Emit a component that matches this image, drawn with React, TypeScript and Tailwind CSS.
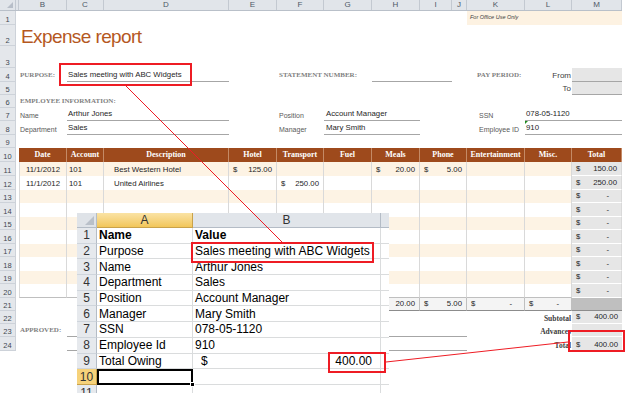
import React from "react";

const G =
  "grid grid-cols-[16px_3px_48px_37px_125px_48px_47px_48px_48px_32px_15px_58px_47px_50px] [&>*]:row-start-1";

const LBL = "font-['Liberation_Serif'] font-bold text-[7px] text-[#7f7f7f] leading-none";
const TXT = "text-[7.8px] text-[#262626] leading-none";
const SM = "text-[7px] text-[#595959] leading-none";

function R({ n, h, children }: { n: number; h: string; children?: React.ReactNode }) {
  return (
    <div className={`${G} ${h}`}>
      <div className="col-start-1 flex items-end justify-center border-r border-b border-[#cdd2d9] bg-[#e4e7eb] pb-[1px] text-[7.5px] leading-none text-[#3f4752]">
        {n}
      </div>
      {children}
    </div>
  );
}

function Money({ v, dashPr = "pr-[10px]" }: { v: string; dashPr?: string }) {
  if (!v) return null;
  return (
    <div className={`flex h-full w-full items-end justify-between pb-[2px] pl-[4px] ${v === "-" ? dashPr : "pr-[4px]"}`}>
      <span>$</span>
      <span>{v}</span>
    </div>
  );
}

const TC = [
  "col-start-3 border-l",
  "col-start-4",
  "col-start-5",
  "col-start-6",
  "col-start-7",
  "col-start-8",
  "col-start-9",
  "col-start-10 col-span-2",
  "col-start-12",
  "col-start-13",
  "col-start-14",
];

const HEAD = ["Date", "Account", "Description", "Hotel", "Transport", "Fuel", "Meals", "Phone", "Entertainment", "Misc.", "Total"];

const DATA: string[][] = [
  ["11/1/2012", "101", "Best Western Hotel", "125.00", "", "", "20.00", "5.00", "", "", "150.00"],
  ["11/1/2012", "101", "United Airlines", "", "250.00", "", "", "", "", "", "250.00"],
  ["", "", "", "", "", "", "", "", "", "", "-"],
  ["", "", "", "", "", "", "", "", "", "", "-"],
  ["", "", "", "", "", "", "", "", "", "", "-"],
  ["", "", "", "", "", "", "", "", "", "", "-"],
  ["", "", "", "", "", "", "", "", "", "", "-"],
  ["", "", "", "", "", "", "", "", "", "", "-"],
  ["", "", "", "", "", "", "", "", "", "", "-"],
  ["", "", "", "", "", "", "", "", "", "", "-"],
];

const ROWH = ["h-[14px]", "h-[14px]", "h-[13px]", "h-[14px]", "h-[13px]", "h-[14px]", "h-[13px]", "h-[14px]", "h-[13px]", "h-[14px]"];

const COLS = ["B", "C", "D", "E", "F", "G", "H", "I", "J", "K", "L", "M"];
const CSTART = ["col-start-3", "col-start-4", "col-start-5", "col-start-6", "col-start-7", "col-start-8", "col-start-9", "col-start-10", "col-start-11", "col-start-12", "col-start-13", "col-start-14"];

function MainSheet() {
  return (
    <div className="w-[622px] font-['Liberation_Sans']">
      <div className={`${G} h-[11px] bg-[#e1e5ea] border-b border-[#b9c0c9]`}>
        <div className="col-start-1 relative border-r border-[#c3c9d1]">
          <div className="absolute right-[2px] bottom-[2px] h-0 w-0 border-l-[6px] border-b-[6px] border-l-transparent border-b-[#b7bec8]" />
        </div>
        <div className="col-start-2 border-r border-[#c3c9d1]" />
        {COLS.map((c, i) => (
          <div
            key={c}
            className={`flex items-center justify-center border-r border-[#c3c9d1] text-[8px] leading-none text-[#4d5866] ${CSTART[i]}`}
          >
            {c}
          </div>
        ))}
      </div>

      <R n={1} h="h-[14px]">
        <div className="col-start-12 col-span-3 flex items-center bg-[#fdf2e2] pl-[3px] text-[5.5px] italic leading-none text-[#404040]">
          For Office Use Only
        </div>
      </R>
      <R n={2} h="h-[21px]">
        <div className="col-start-3 col-span-6 flex items-end pl-[2px] text-[19px] leading-none tracking-[-0.6px] text-[#b5581f]">
          Expense report
        </div>
      </R>
      <R n={3} h="h-[22px]" />
      <R n={4} h="h-[14px]">
        <div className={`col-start-3 flex items-end pb-[3px] pl-[1px] ${LBL}`}>PURPOSE:</div>
        <div className={`col-start-4 col-span-2 flex items-end border-b border-[#a6a6a6] pb-[2px] pl-[1px] ${TXT}`}>
          Sales meeting with ABC Widgets
        </div>
        <div className={`col-start-7 col-span-2 flex items-end pb-[3px] pl-[2px] ${LBL}`}>STATEMENT NUMBER:</div>
        <div className="col-start-9 col-span-2 border-b border-[#a6a6a6]" />
        <div className={`col-start-12 col-span-2 flex items-end pb-[3px] pl-[10px] ${LBL}`}>PAY PERIOD:</div>
        <div className="col-start-13 flex items-end justify-end pb-[2px] pr-[1px] text-[8px] leading-none text-[#404040]">From</div>
        <div className="col-start-14 border-b border-[#a6a6a6] bg-[#e6e6e6]" />
      </R>
      <R n={5} h="h-[13px]">
        <div className="col-start-13 flex items-end justify-end pb-[2px] pr-[1px] text-[8px] leading-none text-[#404040]">To</div>
        <div className="col-start-14 border-b border-[#a6a6a6] bg-[#e6e6e6]" />
      </R>
      <R n={6} h="h-[13px]">
        <div className={`col-start-3 col-span-3 flex items-end pb-[3px] pl-[1px] ${LBL}`}>EMPLOYEE INFORMATION:</div>
      </R>
      <R n={7} h="h-[13px]">
        <div className={`col-start-3 flex items-end pb-[2px] pl-[1px] ${SM}`}>Name</div>
        <div className={`col-start-4 col-span-2 flex items-end border-b border-[#a6a6a6] pb-[2px] pl-[1px] ${TXT}`}>Arthur Jones</div>
        <div className={`col-start-7 flex items-end pb-[2px] pl-[2px] ${SM}`}>Position</div>
        <div className={`col-start-8 col-span-2 flex items-end border-b border-[#a6a6a6] pb-[2px] pl-[2px] ${TXT}`}>Account Manager</div>
        <div className={`col-start-12 flex items-end pb-[2px] pl-[12px] ${SM}`}>SSN</div>
        <div className={`col-start-13 col-span-2 flex items-end border-b border-[#a6a6a6] pb-[2px] pl-[1px] ${TXT}`}>078-05-1120</div>
      </R>
      <R n={8} h="h-[14px]">
        <div className={`col-start-3 col-span-2 flex items-end pb-[2px] pl-[1px] ${SM}`}>Department</div>
        <div className={`col-start-4 col-span-2 flex items-end border-b border-[#a6a6a6] pb-[2px] pl-[1px] ${TXT}`}>Sales</div>
        <div className={`col-start-7 flex items-end pb-[2px] pl-[2px] ${SM}`}>Manager</div>
        <div className={`col-start-8 col-span-2 flex items-end border-b border-[#a6a6a6] pb-[2px] pl-[2px] ${TXT}`}>Mary Smith</div>
        <div className={`col-start-12 flex items-end pb-[2px] pl-[12px] ${SM}`}>Employee ID</div>
        <div className={`relative col-start-13 col-span-2 flex items-end border-b border-[#a6a6a6] pb-[2px] pl-[1px] ${TXT}`}>
          <div className="absolute left-0 top-0 h-0 w-0 border-r-[3px] border-t-[3px] border-r-transparent border-t-[#1f8a1f]" />
          910
        </div>
      </R>
      <R n={9} h="h-[13px]" />
      <R n={10} h="h-[14px]">
        {HEAD.map((hd, i) => (
          <div
            key={hd}
            className={`flex items-center justify-center border-r border-[#c48a66] bg-[#9e4a1c] font-['Liberation_Serif'] text-[8px] font-bold leading-none text-white ${TC[i].replace(" border-l", "")}`}
          >
            {hd}
          </div>
        ))}
      </R>
      {DATA.map((row, ri) => (
        <R key={ri} n={11 + ri} h={ROWH[ri]}>
          {row.map((v, ci) => {
            const band = ri % 2 === 0 ? "bg-[#fdf3e4]" : "bg-white";
            const bg = ci === 10 ? "bg-[#e6e6e6]" : band;
            let content: React.ReactNode = null;
            if (ci === 0)
              content = <div className="flex h-full items-end justify-center pb-[2px]">{v}</div>;
            else if (ci === 1) content = <div className="flex h-full items-end pb-[2px] pl-[2px]">{v}</div>;
            else if (ci === 2) content = <div className="flex h-full items-end pb-[2px] pl-[10px]">{v}</div>;
            else content = <Money v={v} dashPr="pr-[12px]" />;
            return (
              <div
                key={ci}
                className={`border-r border-[#d9d9d9] ${ci === 10 ? "border-b border-b-white" : ""} ${bg} ${TXT} ${TC[ci]} ${ri === 9 && ci < 10 ? "border-b border-b-[#bfbfbf]" : ""}`}
              >
                {content}
              </div>
            );
          })}
        </R>
      ))}
      <R n={21} h="h-[13px]">
        {["", "", "", "20.00", "5.00", "-", "-"].map((v, i) => (
          <div
            key={i}
            className={`border-r border-b border-[#bfbfbf] border-b-[#8c8c8c] bg-[#f4f4f4] ${TXT} ${TC[i + 3]}`}
          >
            <Money v={v} dashPr="pr-[12px]" />
          </div>
        ))}
        <div className="col-start-14 border-b border-[#8c8c8c] bg-[#bfbfbf]" />
      </R>
      <R n={22} h="h-[13px]">
        <div className="col-start-12 col-span-2 flex items-end justify-end pb-[2px] pr-[1px] font-['Liberation_Serif'] text-[7.5px] font-bold leading-none text-[#404040]">
          Subtotal
        </div>
        <div className={`col-start-14 bg-[#e6e6e6] border-b border-white ${TXT}`}>
          <Money v="400.00" />
        </div>
      </R>
      <R n={23} h="h-[13px]">
        <div className={`col-start-3 flex items-end pb-[3px] pl-[1px] ${LBL} text-[6.5px]`}>APPROVED:</div>
        <div className="col-start-4 col-span-8 border-b border-[#a6a6a6]" />
        <div className="col-start-12 col-span-2 flex items-end justify-end pb-[2px] pr-[1px] font-['Liberation_Serif'] text-[7.5px] font-bold leading-none text-[#404040]">
          Advances
        </div>
        <div className="col-start-14 bg-[#e6e6e6] border-b border-white" />
      </R>
      <R n={24} h="h-[14px]">
        <div className="col-start-4 col-span-8 border-b border-[#a6a6a6]" />
        <div className="col-start-12 col-span-2 flex items-end justify-end pb-[2px] pr-[1px] font-['Liberation_Serif'] text-[7.5px] font-bold leading-none text-[#404040]">
          Total
        </div>
        <div className={`col-start-14 bg-[#e6e6e6] ${TXT}`}>
          <Money v="400.00" />
        </div>
      </R>
    </div>
  );
}

const OG = "grid grid-cols-[20px_96px_188px_8px] [&>*]:row-start-1";

const OROWS: [string, string][] = [
  ["Name", "Value"],
  ["Purpose", "Sales meeting with ABC Widgets"],
  ["Name", "Arthur Jones"],
  ["Department", "Sales"],
  ["Position", "Account Manager"],
  ["Manager", "Mary Smith"],
  ["SSN", "078-05-1120"],
  ["Employee Id", "910"],
  ["Total Owing", ""],
];

function Overlay() {
  return (
    <div className="absolute left-[77px] top-[213px] h-[180px] w-[312px] overflow-hidden bg-white font-['Liberation_Sans'] text-[12px] leading-none text-black">
      <div className={`${OG} h-[15px]`}>
        <div className="relative border-r border-b border-[#b4bcc6] bg-[#dfe3e8]">
          <div className="absolute bottom-[2px] right-[2px] h-0 w-0 border-l-[9px] border-b-[9px] border-l-transparent border-b-[#b9c0c9]" />
        </div>
        <div className="flex items-center justify-center border-r border-b border-[#c9a24a] bg-gradient-to-b from-[#fae3a4] to-[#f2c658] text-[#333]">
          A
        </div>
        <div className="flex items-center justify-center border-r border-b border-[#b4bcc6] bg-[#e1e5ea] text-[#333]">B</div>
        <div className="border-b border-[#b4bcc6] bg-[#e1e5ea]" />
      </div>
      {OROWS.map(([a, b], i) => (
        <div key={i} className={`${OG} h-[15.7px]`}>
          <div className="flex items-center justify-center border-r border-b border-[#b4bcc6] border-b-[#cfd5dc] bg-[#e6e9ed] text-[#333]">
            {i + 1}
          </div>
          <div className={`flex items-center border-r border-b border-[#dadcdd] pl-[2px] ${i === 0 ? "font-bold" : ""}`}>{a}</div>
          <div className={`flex items-center border-r border-b border-[#dadcdd] pl-[2px] ${i === 0 ? "font-bold" : ""}`}>
            {i === 8 ? (
              <div className="flex w-full justify-between pl-[6px] pr-[8px]">
                <span>$</span>
                <span>400.00</span>
              </div>
            ) : (
              b
            )}
          </div>
          <div className="border-b border-[#dadcdd]" />
        </div>
      ))}
      <div className={`${OG} h-[15.7px]`}>
        <div className="flex items-center justify-center border-r border-b border-[#c9a24a] bg-[#f6d27a] text-[#333]">10</div>
        <div className="relative border-[2px] border-black">
          <div className="absolute -bottom-[4px] -right-[4px] h-[5px] w-[5px] border border-white bg-black" />
        </div>
        <div className="border-r border-b border-[#dadcdd]" />
        <div className="border-b border-[#dadcdd]" />
      </div>
      <div className={`${OG} h-[15.7px]`}>
        <div className="flex items-start justify-center border-r border-[#b4bcc6] bg-[#e6e9ed] pt-[2px] text-[#333]">11</div>
        <div className="border-r border-[#dadcdd]" />
        <div className="border-r border-[#dadcdd]" />
        <div />
      </div>
    </div>
  );
}

export default function App() {
  return (
    <div className="relative h-[393px] w-[628px] overflow-hidden bg-white">
      <MainSheet />
      <Overlay />
      <svg className="pointer-events-none absolute left-0 top-0" width={628} height={393} viewBox="0 0 628 393">
        <g fill="none" stroke="#ee1c24">
          <rect x={60} y={64} width={131} height={21} strokeWidth={2} />
          <rect x={192} y={243} width={181} height={19} strokeWidth={2} />
          <rect x={329} y={353} width={56} height={19} strokeWidth={2} />
          <rect x={569} y={331} width={55} height={20} strokeWidth={2} />
          <line x1={126} y1={86} x2={282} y2={242} strokeWidth={1} />
          <line x1={386} y1={362} x2={568} y2={342} strokeWidth={1} />
        </g>
      </svg>
    </div>
  );
}
